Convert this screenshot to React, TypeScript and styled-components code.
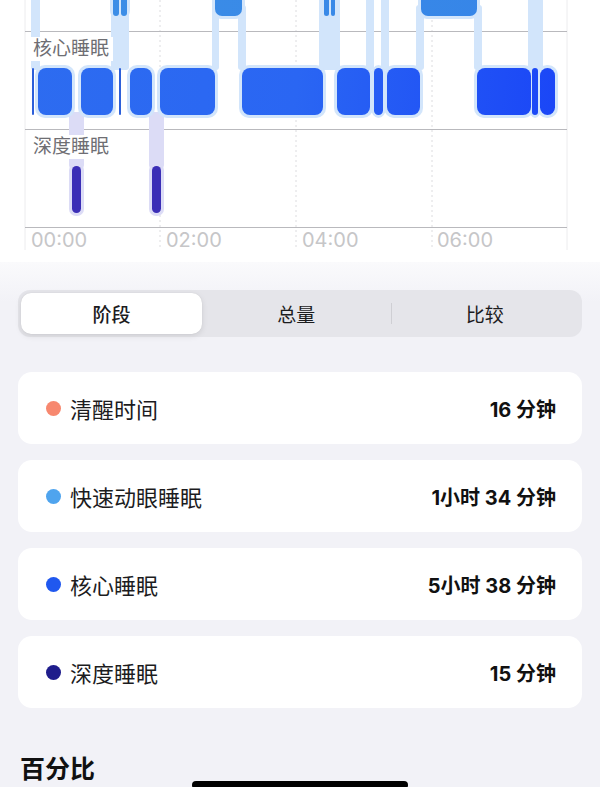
import React from "react";
import styled, { createGlobalStyle, css } from "styled-components";

type Span = [number, number];

const CORE_TOP = 68;
const CORE_BOTTOM = 115;
const DEEP_TOP = 166;
const DEEP_BOTTOM = 213;
const REM_BOTTOM = 16;

const coreBlocks: Span[] = [
  [38, 72], [81, 113], [130, 152], [160, 215], [242, 323], [337, 370],
  [374, 383], [387, 420], [477, 531], [532, 538], [540, 555],
];
const remBlocks: Span[] = [
  [113, 119], [121, 127], [215, 242], [324, 329], [331, 335], [421, 477],
];
const deepBlocks: Span[] = [[72, 81], [152, 161]];
const coreLines = [33, 120];

// light transition bands [x1, x2, y1, y2]
const remBands: [number, number, number, number][] = [
  [31, 40, -10, 70], [111, 129, -10, 70], [212, 219, 5, 70], [238, 246, 5, 70],
  [319, 340, -10, 70], [366, 374, -10, 70], [381, 389, -10, 70],
  [416, 424, 5, 70], [474, 482, 5, 70], [528, 543, -10, 70],
];
const deepBands: [number, number, number, number][] = [
  [69, 84, 112, 168], [149, 164, 112, 168],
];

const gridX = [160, 296, 432];
const ticks = [
  { x: 31, label: "00:00" },
  { x: 166, label: "02:00" },
  { x: 302, label: "04:00" },
  { x: 437, label: "06:00" },
];

const stages = [
  { name: "清醒时间", value: "16 分钟", color: "#f7886f" },
  { name: "快速动眼睡眠", value: "1小时 34 分钟", color: "#4fa4ee" },
  { name: "核心睡眠", value: "5小时 38 分钟", color: "#2058ef" },
  { name: "深度睡眠", value: "15 分钟", color: "#1f1d8c" },
];

const GlobalStyle = createGlobalStyle`
  html, body {
    margin: 0;
    padding: 0;
    background: #f2f2f7;
  }
  body {
    font-family: Inter, "Noto Sans CJK SC", sans-serif;
    -webkit-font-smoothing: antialiased;
  }
`;

const Page = styled.div`
  position: relative;
  width: 600px;
  height: 787px;
  overflow: hidden;
  background: #f2f2f7;
`;

const ChartSection = styled.section`
  height: 262px;
  background: #fff;
`;

const ChartSvg = styled.svg`
  display: block;
`;

const RowLabel = styled.text`
  font-family: "Noto Sans CJK SC", sans-serif;
  font-size: 19px;
  fill: #6e6e73;
`;

const AxisLabel = styled.text`
  font-family: Inter, sans-serif;
  font-size: 20px;
  fill: #c6c6c8;
`;

const Lower = styled.section`
  padding: 28px 18px 0;
  background: linear-gradient(#fafafc 0, #f2f2f7 40px);
`;

const Segmented = styled.div`
  display: flex;
  height: 47px;
  padding: 3px;
  box-sizing: border-box;
  background: #e5e5ea;
  border-radius: 12px;
`;

const Segment = styled.div<{ $active?: boolean; $divider?: boolean }>`
  position: relative;
  flex: 1;
  display: flex;
  align-items: center;
  justify-content: center;
  border-radius: 10px;
  font-family: "Noto Sans CJK SC", sans-serif;
  font-size: 19px;
  font-weight: 400;
  color: #1c1c1e;
  ${(p) =>
    p.$active &&
    css`
      flex: 0 0 181px;
      font-weight: 500;
      background: #fff;
      box-shadow: 0 2px 6px rgba(0, 0, 0, 0.1), 0 0 1px rgba(0, 0, 0, 0.12);
    `}
  ${(p) =>
    p.$divider &&
    css`
      &::before {
        content: "";
        position: absolute;
        left: 0;
        top: 10px;
        bottom: 10px;
        width: 1px;
        background: #cfcfd4;
      }
    `}
`;

const StageList = styled.div`
  display: flex;
  flex-direction: column;
  gap: 16px;
  margin-top: 35px;
`;

const StageCard = styled.div`
  display: flex;
  align-items: center;
  height: 72px;
  padding: 0 26px 0 28px;
  background: #fff;
  border-radius: 14px;
`;

const Dot = styled.span<{ $color: string }>`
  flex: none;
  width: 15px;
  height: 15px;
  margin-right: 9px;
  border-radius: 50%;
  background: ${(p) => p.$color};
`;

const StageName = styled.span`
  flex: 1;
  font-size: 22px;
  color: #1c1c1e;
`;

const StageValue = styled.span`
  font-size: 20px;
  font-weight: 700;
  color: #111;
`;

const Heading = styled.h2`
  margin: 46px 0 0 2px;
  font-size: 25px;
  line-height: 30px;
  font-weight: 700;
  color: #111;
`;

const HomeBar = styled.div`
  position: absolute;
  left: 192px;
  bottom: -2px;
  width: 216px;
  height: 8px;
  border-radius: 4px;
  background: #000;
`;

const SleepChart = () => (
  <ChartSvg width={600} height={262} viewBox="0 0 600 262">
    <defs>
      <linearGradient id="core" gradientUnits="userSpaceOnUse" x1="25" y1="60" x2="567" y2="120">
        <stop offset="0" stopColor="#2d6cf0" />
        <stop offset="0.5" stopColor="#2a66f3" />
        <stop offset="1" stopColor="#1a45f7" />
      </linearGradient>
      <linearGradient id="rem" gradientUnits="userSpaceOnUse" x1="25" y1="0" x2="567" y2="0">
        <stop offset="0" stopColor="#3d8fe6" />
        <stop offset="1" stopColor="#3584e8" />
      </linearGradient>
    </defs>

    <line x1={25} y1={0} x2={25} y2={250} stroke="#ececee" />
    <line x1={567} y1={0} x2={567} y2={250} stroke="#ececee" />
    {gridX.map((x) => (
      <line key={x} x1={x} y1={0} x2={x} y2={250} stroke="#dcdcdf" strokeDasharray="2 3" />
    ))}
    {[31.5, 129.5, 227.5].map((y) => (
      <line key={y} x1={25} y1={y} x2={567} y2={y} stroke="#b9b9bd" />
    ))}

    {remBands.map(([a, b, t, u], i) => (
      <rect key={"rb" + i} x={a} y={t} width={b - a} height={u - t} rx={3} fill="#d2e5fb" />
    ))}
    {deepBands.map(([a, b, t, u], i) => (
      <rect key={"db" + i} x={a} y={t} width={b - a} height={u - t} rx={3} fill="#dcdcf6" />
    ))}

    <rect x={31} y={37} width={82} height={24} fill="#fff" />
    <rect x={31} y={135} width={82} height={24} fill="#fff" />
    <RowLabel x={33} y={55}>核心睡眠</RowLabel>
    <RowLabel x={33} y={153}>深度睡眠</RowLabel>

    {remBlocks.map(([a, b], i) => (
      <rect key={"rh" + i} x={a - 3} y={-12} width={b - a + 6} height={REM_BOTTOM + 15} rx={9} fill="#d2e5fb" />
    ))}
    {coreBlocks.map(([a, b], i) => (
      <rect key={"ch" + i} x={a - 3} y={CORE_TOP - 3} width={b - a + 6} height={CORE_BOTTOM - CORE_TOP + 6} rx={10} fill="#d2e5fb" />
    ))}
    {deepBlocks.map(([a, b], i) => (
      <rect key={"dh" + i} x={a - 3} y={DEEP_TOP - 3} width={b - a + 6} height={DEEP_BOTTOM - DEEP_TOP + 6} rx={7} fill="#dcdcf6" />
    ))}

    {remBlocks.map(([a, b], i) => (
      <rect key={"r" + i} x={a} y={-10} width={b - a} height={REM_BOTTOM + 10} rx={Math.min(7, (b - a) / 2)} fill="url(#rem)" />
    ))}
    {coreBlocks.map(([a, b], i) => (
      <rect key={"c" + i} x={a} y={CORE_TOP} width={b - a} height={CORE_BOTTOM - CORE_TOP} rx={Math.min(8, (b - a) / 2)} fill="url(#core)" />
    ))}
    {coreLines.map((x) => (
      <rect key={"l" + x} x={x - 1} y={CORE_TOP} width={2} height={CORE_BOTTOM - CORE_TOP} rx={1} fill="#2c5fd9" />
    ))}
    {deepBlocks.map(([a, b], i) => (
      <rect key={"d" + i} x={a} y={DEEP_TOP} width={b - a} height={DEEP_BOTTOM - DEEP_TOP} rx={4.5} fill="#3b2eb6" />
    ))}

    {ticks.map((t) => (
      <AxisLabel key={t.label} x={t.x} y={247}>
        {t.label}
      </AxisLabel>
    ))}
  </ChartSvg>
);

const App = () => (
  <Page>
    <GlobalStyle />
    <ChartSection>
      <SleepChart />
    </ChartSection>
    <Lower>
      <Segmented>
        <Segment $active>阶段</Segment>
        <Segment>总量</Segment>
        <Segment $divider>比较</Segment>
      </Segmented>
      <StageList>
        {stages.map((s) => (
          <StageCard key={s.name}>
            <Dot $color={s.color} />
            <StageName>{s.name}</StageName>
            <StageValue>{s.value}</StageValue>
          </StageCard>
        ))}
      </StageList>
      <Heading>百分比</Heading>
    </Lower>
    <HomeBar />
  </Page>
);

export default App;
